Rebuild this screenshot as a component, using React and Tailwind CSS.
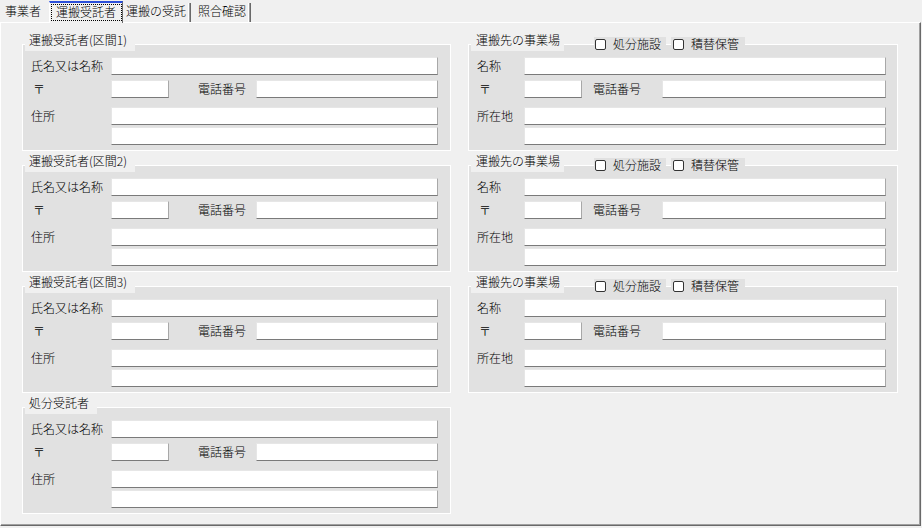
import React from 'react';

const Field = ({ className = '' }) => (
  <input
    readOnly
    className={
      'h-[18px] min-w-0 bg-white border border-t-[#e6e6e6] border-l-[#e6e6e6] border-r-[#a8a8a8] border-b-[#7a7a7a] outline-none ' +
      className
    }
  />
);

const Check = ({ label, className = '' }) => (
  <div className={'flex h-[14px] items-center bg-[#e1e1e1] ' + className}>
    <span className="h-[11px] w-[11px] rounded-[2px] border border-[#333333] bg-white" />
    <span className="ml-[7px] leading-[14px]">{label}</span>
  </div>
);

function ConsigneeGroup({ title }) {
  return (
    <div className="relative h-[107px] w-[429px] border border-white bg-[#e1e1e1] pl-[8px] pr-[12px] pt-[12px]">
      <div className="absolute left-[2px] top-[-13px] h-[19px] bg-[#f0f0f0] pl-[4px] pr-[8px] leading-[16px]">
        {title}
      </div>
      <div className="flex h-[18px] items-center">
        <span className="w-[80px]">氏名又は名称</span>
        <Field className="flex-1" />
      </div>
      <div className="mt-[5px] flex h-[18px] items-center">
        <span className="w-[80px] pl-[2px]">〒</span>
        <Field className="w-[58px]" />
        <span className="ml-[29px] w-[58px]">電話番号</span>
        <Field className="flex-1" />
      </div>
      <div className="mt-[9px] flex h-[18px] items-center">
        <span className="w-[80px]">住所</span>
        <Field className="flex-1" />
      </div>
      <div className="mt-[2px] flex h-[18px] pl-[80px]">
        <Field className="flex-1" />
      </div>
    </div>
  );
}

function SiteGroup() {
  return (
    <div className="relative h-[107px] w-[430px] border border-white bg-[#e1e1e1] pl-[8px] pr-[11px] pt-[12px]">
      <div className="absolute left-[2px] top-[-13px] flex items-start">
        <div className="h-[19px] bg-[#f0f0f0] pl-[5px] pr-[4px] leading-[16px]">運搬先の事業場</div>
        <Check label="処分施設" className="ml-[30px] mt-[5px] w-[72px] pl-[1px]" />
        <Check label="積替保管" className="ml-[5px] mt-[5px] w-[74px] pl-[2px]" />
      </div>
      <div className="flex h-[18px] items-center">
        <span className="w-[47px]">名称</span>
        <Field className="flex-1" />
      </div>
      <div className="mt-[5px] flex h-[18px] items-center">
        <span className="w-[47px] pl-[2px]">〒</span>
        <Field className="w-[58px]" />
        <span className="ml-[11px] w-[69px]">電話番号</span>
        <Field className="flex-1" />
      </div>
      <div className="mt-[9px] flex h-[18px] items-center">
        <span className="w-[47px]">所在地</span>
        <Field className="flex-1" />
      </div>
      <div className="mt-[2px] flex h-[18px] pl-[47px]">
        <Field className="flex-1" />
      </div>
    </div>
  );
}

const Separator = () => (
  <span className="h-[19px] w-[3px] border-l border-r border-l-white border-r-[#696969] bg-[#a0a0a0]" />
);

export default function App() {
  return (
    <div className="h-[528px] w-[922px] overflow-hidden bg-[#f0f0f0] text-[12px] font-light text-black font-['Noto_Sans_CJK_JP','Noto_Sans',sans-serif]">
      {/* tab strip */}
      <div className="flex h-[22px] items-end">
        <div className="flex h-[19px] w-[49px] items-start pl-[5px] leading-[16px]">事業者</div>
        <div className="relative z-10 mb-[-1px] flex h-[22px] w-[74px] flex-col border-l border-r border-t-2 border-l-white border-r-[#696969] border-t-[#2b4fd9] bg-[#f0f0f0] pl-[1px] pt-[1px]">
          <div className="h-[17px] w-[71px] border border-dotted border-black pl-[4px] leading-[13px]">運搬受託者</div>
        </div>
        <div className="flex h-[19px] w-[68px] items-start">
          <span className="flex-1 pl-[3px] leading-[16px]">運搬の受託</span>
          <Separator />
        </div>
        <div className="flex h-[19px] w-[60px] items-start">
          <span className="flex-1 pl-[7px] leading-[16px]">照合確認</span>
          <Separator />
        </div>
      </div>

      {/* tab page */}
      <div className="h-[504px] w-[921px] border border-l-white border-t-white border-r-[#696969] border-b-[#696969] pl-[21px] pt-[21px] shadow-[inset_-1px_-1px_0_#a0a0a0]">
        <div className="flex gap-[17px]">
          <div className="flex flex-col gap-[14px]">
            <ConsigneeGroup title="運搬受託者(区間1)" />
            <ConsigneeGroup title="運搬受託者(区間2)" />
            <ConsigneeGroup title="運搬受託者(区間3)" />
            <ConsigneeGroup title="処分受託者" />
          </div>
          <div className="flex flex-col gap-[14px]">
            <SiteGroup />
            <SiteGroup />
            <SiteGroup />
          </div>
        </div>
      </div>
    </div>
  );
}
